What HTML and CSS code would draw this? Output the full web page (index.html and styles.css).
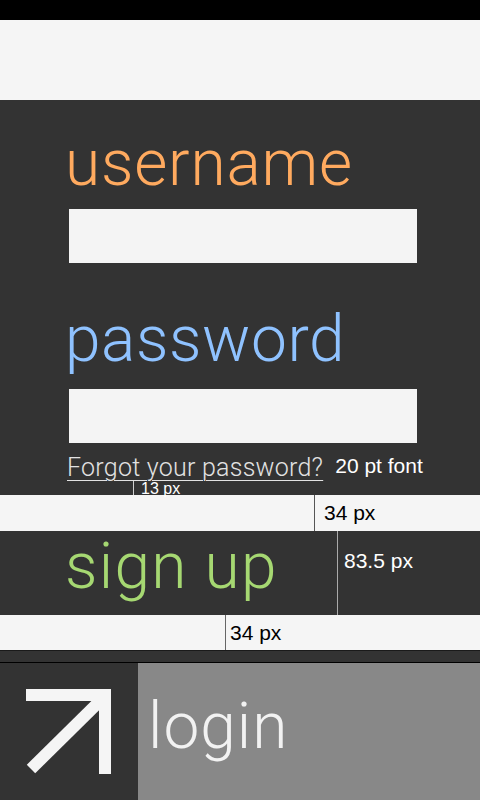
FILE: index.html
```html
<!DOCTYPE html>
<html>
<head>
<meta charset="utf-8">
<link rel="stylesheet" href="styles.css">
</head>
<body>
<div class="status"></div>
<div class="header"></div>
<div class="form">
  <div class="label username">username</div>
  <div class="field"></div>
  <div class="label password">password</div>
  <div class="field field-2"></div>
  <div class="forgot-row">
    <span class="forgot">Forgot your password?</span>
    <span class="note note-font">20 pt font</span>
  </div>
  <div class="mini-row"><span class="mini-note">13 px</span></div>
</div>
<div class="band band-a"><span class="measure measure-a">34 px</span></div>
<div class="signup">
  <div class="signup-left"><span class="label signup-text">sign up</span></div>
  <div class="signup-right"><span class="note">83.5 px</span></div>
</div>
<div class="band band-b"><span class="measure measure-b">34 px</span></div>
<div class="separator"></div>
<div class="bottom">
  <div class="icon-box">
    <svg width="138" height="137" viewBox="0 0 138 137">
      <rect x="26" y="26" width="85" height="12" fill="#f5f5f5"/>
      <rect x="99" y="26" width="12" height="85" fill="#f5f5f5"/>
      <line x1="106" y1="32" x2="31" y2="106" stroke="#f5f5f5" stroke-width="12"/>
    </svg>
  </div>
  <div class="login"><span class="login-text">login</span></div>
</div>
</body>
</html>
```
FILE: styles.css
```css
html, body {
  margin: 0;
  padding: 0;
}
body {
  width: 480px;
  height: 800px;
  overflow: hidden;
  background: #333333;
  font-family: "Liberation Sans", Arial, sans-serif;
}
.status {
  height: 20px;
  background: #000000;
}
.header {
  height: 80px;
  background: #f5f5f5;
}
.form {
  box-sizing: border-box;
  height: 395px;
  background: #333333;
  padding-top: 32px;
  padding-left: 65px;
}
.label {
  font-family: Roboto, "Liberation Sans", sans-serif;
  font-weight: 300;
  font-size: 64px;
  line-height: 64px;
  letter-spacing: 0.8px;
  display: block;
}
.username {
  color: #ffaa5f;
}
.password {
  color: #8fc2ff;
  margin-top: 45px;
  letter-spacing: 0.6px;
}
.field {
  margin-top: 13px;
  margin-left: 4px;
  width: 348px;
  height: 54px;
  background: #f4f4f4;
}
.field-2 {
  margin-top: 17px;
}
.forgot-row {
  display: flex;
  align-items: flex-start;
  margin-top: 11px;
  height: 27px;
}
.forgot {
  font-family: Roboto, "Liberation Sans", sans-serif;
  font-weight: 300;
  font-size: 25px;
  line-height: 27px;
  letter-spacing: 0.25px;
  color: #e2e2e2;
  margin-left: 2px;
  text-decoration: underline;
  text-decoration-thickness: 1px;
  text-underline-offset: 4px;
}
.note {
  font-size: 21px;
  line-height: 24px;
  color: #ffffff;
}
.note-font {
  margin-left: 12px;
}
.mini-row {
  height: 14px;
  margin-left: 68px;
  border-left: 1px solid #d0d0d0;
  padding-left: 7px;
}
.mini-note {
  display: block;
  font-size: 16px;
  line-height: 14px;
  color: #ffffff;
  padding-top: 1px;
}
.band {
  background: #f5f5f5;
  display: flex;
}
.band-a {
  height: 36px;
}
.band-b {
  height: 35px;
}
.measure {
  font-size: 21px;
  color: #000000;
  display: block;
}
.measure-a {
  margin-left: 314px;
  border-left: 1px solid #555555;
  padding-left: 9px;
  line-height: 36px;
}
.measure-b {
  margin-left: 225px;
  border-left: 1px solid #666666;
  padding-left: 4px;
  line-height: 35px;
}
.signup {
  height: 84px;
  display: flex;
  background: #333333;
}
.signup-left {
  width: 338px;
  box-sizing: border-box;
  padding-left: 65px;
  padding-top: 4px;
  border-right: 1px solid #aaaaaa;
}
.signup-text {
  color: #a6d872;
  letter-spacing: 1.3px;
}
.signup-right {
  padding-left: 6px;
  padding-top: 18px;
}
.separator {
  height: 11px;
  border-top: 1px solid #1a1a1a;
  border-bottom: 1px solid #000000;
  background: #333333;
}
.bottom {
  height: 137px;
  display: flex;
}
.icon-box {
  width: 138px;
  height: 137px;
  background: #333333;
}
.icon-box svg {
  display: block;
}
.login {
  flex: 1;
  background: #888888;
  padding-top: 32px;
  padding-left: 10px;
}
.login-text {
  font-family: Roboto, "Liberation Sans", sans-serif;
  font-weight: 300;
  font-size: 64px;
  line-height: 64px;
  letter-spacing: 1px;
  color: #f2f2f2;
}
```
